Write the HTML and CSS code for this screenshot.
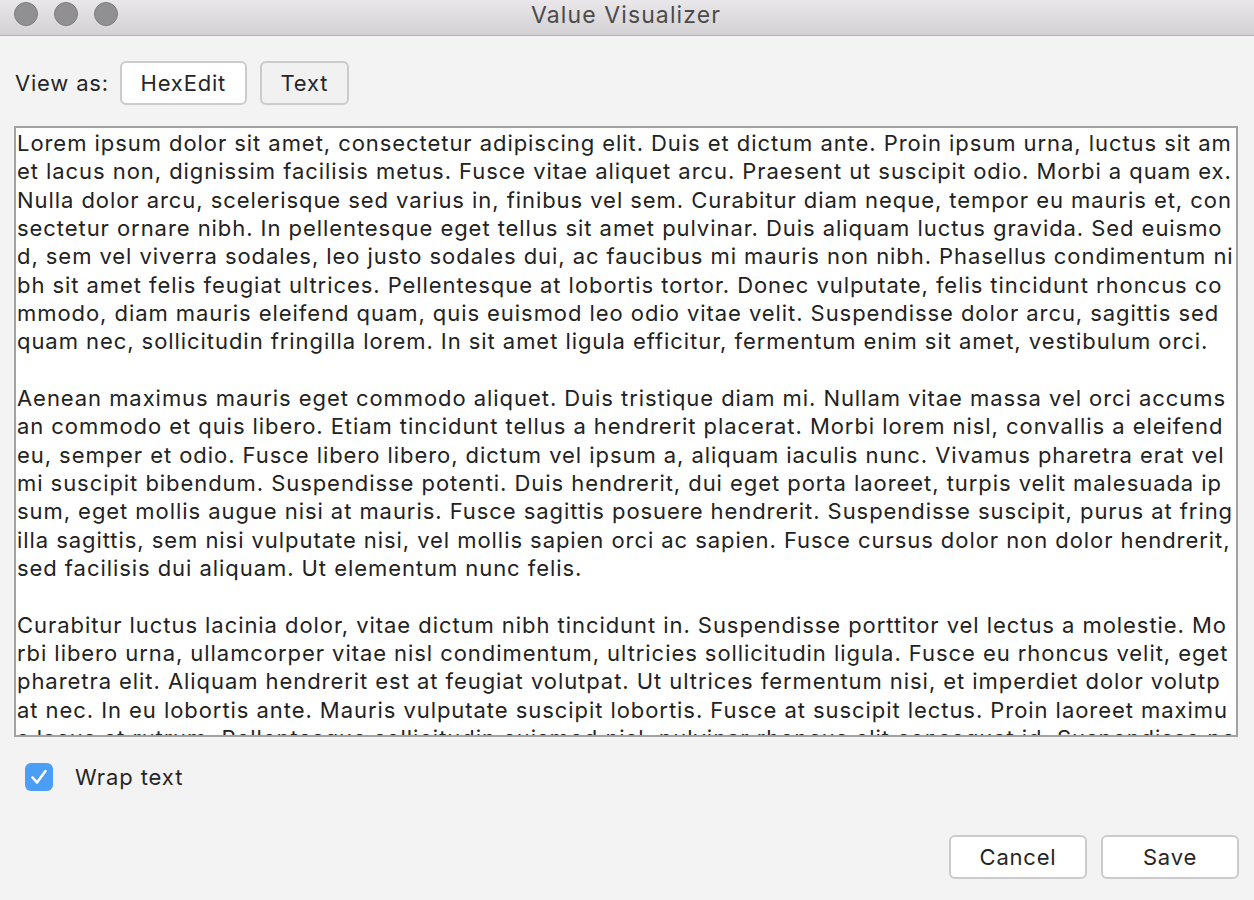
FILE: index.html
```html
<!DOCTYPE html>
<html>
<head>
<meta charset="utf-8">
<title>Value Visualizer</title>
<link rel="stylesheet" href="styles.css">
</head>
<body>
<div class="window">
  <div class="titlebar">
    <div class="lights">
      <span class="light"></span><span class="light"></span><span class="light"></span>
    </div>
    <div class="title">Value Visualizer</div>
  </div>
  <div class="content">
    <div class="viewas">
      <span class="label">View as:</span>
      <button class="btn hex">HexEdit</button>
      <button class="btn text pressed">Text</button>
    </div>
    <div class="textarea"><div class="lines">Lorem ipsum dolor sit amet, consectetur adipiscing elit. Duis et dictum ante. Proin ipsum urna, luctus sit am
et lacus non, dignissim facilisis metus. Fusce vitae aliquet arcu. Praesent ut suscipit odio. Morbi a quam ex.
Nulla dolor arcu, scelerisque sed varius in, finibus vel sem. Curabitur diam neque, tempor eu mauris et, con
sectetur ornare nibh. In pellentesque eget tellus sit amet pulvinar. Duis aliquam luctus gravida. Sed euismo
d, sem vel viverra sodales, leo justo sodales dui, ac faucibus mi mauris non nibh. Phasellus condimentum ni
bh sit amet felis feugiat ultrices. Pellentesque at lobortis tortor. Donec vulputate, felis tincidunt rhoncus co
mmodo, diam mauris eleifend quam, quis euismod leo odio vitae velit. Suspendisse dolor arcu, sagittis sed
quam nec, sollicitudin fringilla lorem. In sit amet ligula efficitur, fermentum enim sit amet, vestibulum orci.

Aenean maximus mauris eget commodo aliquet. Duis tristique diam mi. Nullam vitae massa vel orci accums
an commodo et quis libero. Etiam tincidunt tellus a hendrerit placerat. Morbi lorem nisl, convallis a eleifend
eu, semper et odio. Fusce libero libero, dictum vel ipsum a, aliquam iaculis nunc. Vivamus pharetra erat vel
mi suscipit bibendum. Suspendisse potenti. Duis hendrerit, dui eget porta laoreet, turpis velit malesuada ip
sum, eget mollis augue nisi at mauris. Fusce sagittis posuere hendrerit. Suspendisse suscipit, purus at fring
illa sagittis, sem nisi vulputate nisi, vel mollis sapien orci ac sapien. Fusce cursus dolor non dolor hendrerit,
sed facilisis dui aliquam. Ut elementum nunc felis.

Curabitur luctus lacinia dolor, vitae dictum nibh tincidunt in. Suspendisse porttitor vel lectus a molestie. Mo
rbi libero urna, ullamcorper vitae nisl condimentum, ultricies sollicitudin ligula. Fusce eu rhoncus velit, eget
pharetra elit. Aliquam hendrerit est at feugiat volutpat. Ut ultrices fermentum nisi, et imperdiet dolor volutp
at nec. In eu lobortis ante. Mauris vulputate suscipit lobortis. Fusce at suscipit lectus. Proin laoreet maximu
s lacus et rutrum. Pellentesque sollicitudin euismod nisl, pulvinar rhoncus elit consequat id. Suspendisse po</div></div>
    <div class="wrap">
      <span class="checkbox">
        <svg width="28" height="28" viewBox="0 0 28 28"><path d="M7.5 14.5 L12 19.5 L20.5 8" fill="none" stroke="#fff" stroke-width="2.6" stroke-linecap="round" stroke-linejoin="round"/></svg>
      </span>
      <span class="wraplabel">Wrap text</span>
    </div>
    <div class="actions">
      <button class="btn action">Cancel</button>
      <button class="btn action">Save</button>
    </div>
  </div>
</div>
</body>
</html>
```
FILE: styles.css
```css
* { box-sizing: border-box; }
html, body { margin: 0; padding: 0; }
body {
  width: 1254px;
  height: 900px;
  overflow: hidden;
  background: #f3f3f3;
  font-family: Inter, "Noto Sans", "Liberation Sans", sans-serif;
  color: #262626;
}
.window {
  display: flex;
  flex-direction: column;
  height: 900px;
}
.titlebar {
  height: 36px;
  flex: none;
  position: relative;
  display: flex;
  align-items: center;
  justify-content: center;
  background: linear-gradient(#e9e7e9, #d3d1d3);
  border-bottom: 1px solid #b3b2b3;
}
.lights {
  position: absolute;
  left: 14px;
  top: 2px;
  display: flex;
  gap: 16px;
}
.light {
  width: 24px;
  height: 24px;
  border-radius: 50%;
  background: #908f92;
  border: 1px solid #7e7d80;
}
.title {
  font-size: 23px;
  letter-spacing: 1.1px;
  color: #4b4b4b;
  margin-top: -6px;
  margin-left: -2px;
}
.content {
  flex: 1;
  display: flex;
  flex-direction: column;
  padding: 25px 15px 0 14px;
}
.viewas {
  display: flex;
  align-items: center;
  height: 44px;
  margin-bottom: 21px;
}
.label {
  font-size: 22px;
  letter-spacing: 0.8px;
  margin-left: 1px;
  margin-right: 11px;
}
.btn {
  font-family: inherit;
  font-size: 22px;
  letter-spacing: 0.8px;
  color: #262626;
  background: #fff;
  border: 2px solid #cbcbcb;
  border-radius: 6px;
  height: 44px;
  padding: 0;
}
.hex { width: 127px; margin-right: 13px; }
.text { width: 89px; }
.pressed { background: #f1f1f1; }
.textarea {
  height: 611px;
  width: 1224px;
  background: #fff;
  border: 2px solid #a2a2a2;
  overflow: hidden;
  padding: 1px 0 0 1px;
}
.lines {
  white-space: pre;
  font-size: 22px;
  letter-spacing: 0.94px;
  line-height: 28.33px;
  color: #222;
}
.wrap {
  display: flex;
  align-items: center;
  margin-top: 25px;
  margin-left: 11px;
  height: 30px;
}
.checkbox {
  width: 28px;
  height: 28px;
  border-radius: 6px;
  background: #4a9ef6;
  display: flex;
}
.wraplabel {
  font-size: 22px;
  letter-spacing: 0.9px;
  margin-left: 22px;
}
.actions {
  display: flex;
  justify-content: flex-end;
  gap: 14px;
  margin-top: 43px;
}
.action { width: 138px; }
```
